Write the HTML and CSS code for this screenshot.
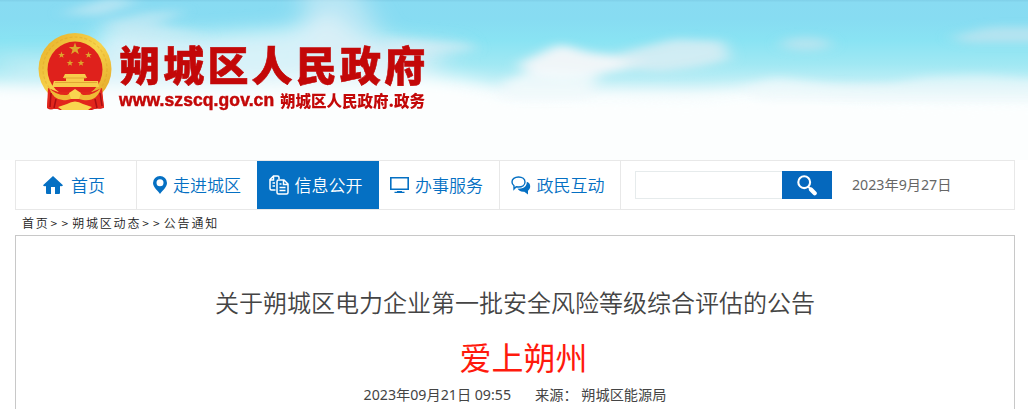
FILE: index.html
```html
<!DOCTYPE html>
<html lang="zh-CN">
<head>
    <meta charset="UTF-8">
    <meta name="viewport" content="width=device-width, initial-scale=1.0">
    <title>朔城区人民政府</title>
    <link rel="stylesheet" href="styles.css">
</head>
<body>
    <header class="header">
        <svg class="sky" viewBox="0 0 1028 160" preserveAspectRatio="none" aria-hidden="true">
            <defs>
                <linearGradient id="sky-color" x1="0" y1="0" x2="0" y2="1">
                    <stop offset="0" stop-color="#7fcfe8"/>
                    <stop offset=".015" stop-color="#88dbf2"/>
                    <stop offset=".12" stop-color="#87dcf2"/>
                    <stop offset=".25" stop-color="#89e3f3"/>
                    <stop offset=".4" stop-color="#a0e8f3"/>
                    <stop offset=".5" stop-color="#bbeef6"/>
                    <stop offset=".6" stop-color="#e9f7fa"/>
                    <stop offset=".75" stop-color="#fcfdfe"/>
                    <stop offset="1" stop-color="#fff"/>
                </linearGradient>
                <filter id="soft" x="-30%" y="-50%" width="160%" height="200%"><feGaussianBlur stdDeviation="13 9"/></filter>
                <filter id="thin" x="-30%" y="-50%" width="160%" height="200%"><feGaussianBlur stdDeviation="8 4"/></filter>
            </defs>
            <rect width="1028" height="160" fill="url(#sky-color)"/>
            <g filter="url(#soft)">
                <path d="M-40 84L40 88 100 82 210 84 380 68 460 80 520 97 600 94 700 96 780 86 860 97 1080 100V220H-40Z" fill="#fcfefe"/>
                <path d="M105 25L200 34 290 28 330 10 360 38 440 48 400 85 80 88Z" fill="#e2f3f9" opacity=".85"/>
                <path d="M300 -15H355L385 38 465 46 430 72 310 55Z" fill="#dceef6" opacity=".55"/>
                <path d="M-10 56L80 56 110 70 20 82Z" fill="#d9f2f8" opacity=".5"/>
            </g>
            <g filter="url(#thin)">
                <path d="M60 14L110 -2 140 2 100 15Z" fill="#cceaf4" opacity=".7"/>
                <path d="M105 24L145 12 187 10 155 26 210 36 130 40Z" fill="#cdebf4" opacity=".6"/>
                <path d="M382 39L470 43 476 50 400 56Z" fill="#d8edf5" opacity=".65"/>
                <path d="M518 64L560 44 590 53 640 58 644 67 600 74 565 80 530 76Z" fill="#f0f5f8"/>
                <path d="M620 53L674 39 724 41 730 60 700 67 660 72 625 68Z" fill="#dbedf3" opacity=".85"/>
                <path d="M505 80L545 67 600 73 590 98 500 98Z" fill="#f2f9fb" opacity=".85"/>
                <ellipse cx="806" cy="44" rx="25" ry="7" fill="#c2e4ef" opacity=".75"/>
                <path d="M950 37L990 27 1050 27V43H965Z" fill="#b9e3ef" opacity=".9"/>
                <path d="M740 88L775 78 830 85 890 84 925 77 980 75 1050 80V100H760Z" fill="#edf7fa" opacity=".65"/>
            </g>
        </svg>
        <div class="logo">
            <svg class="emblem" viewBox="0 0 74 78" aria-hidden="true">
                <defs>
                    <linearGradient id="gold" x1="0" y1="0" x2="1" y2="1">
                        <stop offset="0" stop-color="#e5ad28"/>
                        <stop offset=".5" stop-color="#f8d44c"/>
                        <stop offset="1" stop-color="#e0a022"/>
                    </linearGradient>
                    <path id="star" d="M0-1L.24-.31.95-.31.38.12.59.81 0 .4-.59.81-.38.12-.95-.31-.24-.31Z"/>
                </defs>
                <path d="M11 54L9 75Q13 78 17 75L22 77H54L59 75Q63 77 66 74L63 54Z" fill="#d71b18"/>
                <ellipse cx="37" cy="36" rx="36.5" ry="36" fill="url(#gold)"/>
                <ellipse cx="37" cy="36" rx="32" ry="32" fill="none" stroke="#d79c23" stroke-width="1.2" stroke-dasharray="3 2" opacity=".35"/>
                <ellipse cx="37" cy="36.5" rx="27.5" ry="28" fill="#df211c"/>
                <g fill="#dda52d">
                    <use href="#star" transform="translate(37 16) scale(6.5)"/>
                    <use href="#star" transform="translate(23.5 22) scale(3.5)"/>
                    <use href="#star" transform="translate(50.5 22) scale(3.5)"/>
                    <use href="#star" transform="translate(32 30) scale(3.5)"/>
                    <use href="#star" transform="translate(43 30) scale(3.5)"/>
                </g>
                <path d="M27 41H47L49 45H46V48H60L61 54H14L16 48H28V45H25Z" fill="#f8cd4b"/>
                <path d="M26 45H48M17 49.5H59" stroke="#dc9c2d" stroke-width=".8"/>
                <path d="M10 55L20 59H54L64 55 66 75 57 76 44 76H30L17 76 9 75Z" fill="#e2261c"/>
                <path d="M11 55Q19 63 29 62L37 57 45 62Q55 63 63 55Q59 69 45 67L37 65 29 67Q16 69 11 55Z" fill="#efb936"/>
                <path d="M31 60L37 56 43 60 41 66H33ZM29 71Q37 66 45 71L54 74 50 77H24L20 74Z" fill="#f9d64f"/>
                <path d="M13 60L12 74M18 66L16 75M57 66L59 75M62 60L64 73" stroke="#a80f13" stroke-width="1.5"/>
            </svg>
            <div class="logo-text">
                <h1>朔城区人民政府</h1>
                <p><span class="domain">www.szscq.gov.cn</span><span class="domain-cn">朔城区人民政府.政务</span></p>
            </div>
        </div>
    </header>
    <div class="container">
        <nav class="navbar">
            <ul>
                <li><a href="#">
                    <svg class="icon-home" width="20" height="18" viewBox="0 0 20 18" fill="currentColor"><path d="M10 0L20 9.2Q19 10.8 17 10V17Q17 18 16 18H12V11H8V18H4Q3 18 3 17V10Q1 10.8 0 9.2Z"/></svg>
                    <span>首页</span></a></li>
                <li><a href="#">
                    <svg width="14" height="18" viewBox="0 0 14 18" fill="currentColor"><path fill-rule="evenodd" d="M7 0A7 7 0 0 1 14 7C14 11 9 15 7 18 5 15 0 11 0 7A7 7 0 0 1 7 0ZM7 3.2A3.5 3.5 0 1 0 7 10.2 3.5 3.5 0 1 0 7 3.2Z"/></svg>
                    <span>走进城区</span></a></li>
                <li class="active"><a href="#">
                    <svg width="20" height="20" viewBox="0 0 20 20" fill="none" stroke="currentColor" stroke-width="1.5"><path d="M6.5 15H2.5Q1 15 1 13.5V4.5L4.5 1H8.5Q10 1 10 2.5V4M1 5H4.5V1M3.5 8H6M3.5 11H6"/><path d="M8 17.5V6.5Q8 5 9.5 5H15L19 9V17.5Q19 19 17.5 19H9.5Q8 19 8 17.5ZM14.5 5V9.5H19M10.5 9H12.5M10.5 12.5H16.5M10.5 15.5H16.5"/></svg>
                    <span>信息公开</span></a></li>
                <li class="shifted"><a href="#">
                    <svg width="19" height="16" viewBox="0 0 19 16"><path d="M.8.8H18.2V12.2H.8Z" fill="none" stroke="currentColor" stroke-width="1.6"/><path d="M7 14H12V14.7H14.5V16H4.5V14.7H7Z" fill="currentColor"/></svg>
                    <span>办事服务</span></a></li>
                <li class="shifted"><a href="#">
                    <svg width="20" height="19" viewBox="0 0 20 19"><path d="M7.5 1C11.3 1 14 3 14 6S11.3 11 7.5 11L5.2 10.8 3 13V9.8C1.6 8.8 1 7.6 1 6 1 3 3.7 1 7.5 1Z" fill="none" stroke="currentColor" stroke-width="1.4"/><path d="M15.8 5.7C18.2 6.4 19.2 8.2 19.2 10.3 19.2 12.3 18.4 13.6 17 14.7V18.5L13.3 15.8C10 16.2 7.5 14.8 6.6 12.6 12 13 16 10.5 15.8 5.7Z" fill="currentColor"/></svg>
                    <span>政民互动</span></a></li>
            </ul>
            <form class="search">
                <input type="text" aria-label="搜索">
                <button type="button" aria-label="搜索">
                    <svg width="20" height="21" viewBox="0 0 20 21" fill="none" stroke="#fff" stroke-linecap="round"><circle cx="7.2" cy="7.2" r="5.9" stroke-width="2.1"/><path d="M11.5 12L14 14.3" stroke-width="2"/><path d="M14 14.5L17.7 18.2" stroke-width="4.2"/></svg>
                </button>
            </form>
            <span class="today">2023年9月27日</span>
        </nav>
        <div class="breadcrumb"><a href="#">首页</a><span>&gt;&gt;</span><a href="#">朔城区动态</a><span>&gt;&gt;</span><a href="#">公告通知</a></div>
        <main class="article">
            <h2>关于朔城区电力企业第一批安全风险等级综合评估的公告</h2>
            <p class="slogan">爱上朔州</p>
            <p class="info"><span>2023年09月21日 09:55</span><span>来源： 朔城区能源局</span></p>
        </main>
    </div>
</body>
</html>
```
FILE: styles.css
```css
* {
    box-sizing: border-box;
}
body {
    margin: 0;
    background: #fff;
    font-family: "Noto Sans CJK SC", sans-serif;
    color: #444;
}
h1, h2, p, ul {
    margin: 0;
    padding: 0;
    font-weight: normal;
}
a {
    color: inherit;
    text-decoration: none;
}
svg {
    display: block;
    flex: none;
}

.header {
    position: relative;
    height: 160px;
}
.sky {
    position: absolute;
    top: 0;
    left: 0;
    width: 100%;
    height: 160px;
}
.logo {
    position: relative;
    display: flex;
    padding: 33px 0 0 38px;
    color: #c30808;
}
.emblem {
    width: 74px;
    height: 78px;
}
.logo-text {
    margin: 7px 0 0 7px;
    white-space: nowrap;
}
.logo-text h1 {
    height: 50px;
    font-size: 41px;
    font-weight: 900;
    line-height: 46px;
    letter-spacing: 3.2px;
    -webkit-text-stroke: 0.6px #c30808;
}
.logo-text p {
    display: flex;
    height: 20px;
    line-height: 20px;
}
.domain {
    width: 161px;
    font: bold 17.5px/20px "Liberation Sans", Arial, sans-serif;
    letter-spacing: 0.1px;
    -webkit-text-stroke: 0.5px #c30808;
}
.domain-cn {
    font-size: 15.5px;
    font-weight: 900;
}

.container {
    width: 1000px;
    margin: 0 13px 0 15px;
}
.navbar {
    display: flex;
    align-items: center;
    height: 50px;
    border: 1px solid #e8e8e8;
}
.navbar ul {
    display: flex;
    height: 48px;
    list-style: none;
}
.navbar li {
    width: 121px;
    border-right: 1px solid #e8e8e8;
}
.navbar li a {
    display: flex;
    align-items: center;
    justify-content: center;
    gap: 6px;
    height: 48px;
    color: #0570c3;
    font-size: 17px;
    font-weight: 350;
    white-space: nowrap;
}
.navbar li a span {
    margin-bottom: 1px;
}
.navbar li:first-child a {
    padding-right: 4px;
}
.navbar li .icon-home {
    margin-right: 2px;
}
.navbar li.active {
    width: 122px;
    margin: 0 0 0 -1px;
    background: #0570c3;
    border: 0;
}
.navbar li.active a {
    padding-right: 5px;
    color: #fff;
}
.navbar li.shifted a {
    padding-right: 5px;
}
.search {
    display: flex;
    margin-left: 14px;
}
.search input {
    width: 147px;
    height: 28px;
    border: 1px solid #e6ebec;
    border-right: 0;
    outline: 0;
}
.search button {
    display: flex;
    align-items: center;
    justify-content: center;
    width: 50px;
    height: 28px;
    padding: 0;
    border: 0;
    background: #0568bd;
}
.today {
    margin: 0 0 2px 20px;
    color: #666;
    font-family: "Noto Sans", "Noto Sans CJK SC", sans-serif;
    font-size: 14.2px;
}

.breadcrumb {
    height: 25px;
    padding-left: 7px;
    color: #222;
    font-size: 12px;
    font-weight: 350;
    line-height: 26px;
    letter-spacing: 1.8px;
}
.breadcrumb span {
    letter-spacing: 4.2px;
    padding-left: 1px;
}

.article {
    height: 174px;
    padding-top: 44px;
    border: 1px solid #c8c8c8;
    border-bottom: 0;
    text-align: center;
}
.article h2 {
    font-size: 24px;
    font-weight: 350;
    line-height: 44px;
}
.slogan {
    height: 60px;
    margin-left: 17px;
    color: #ff1a0d;
    font-size: 32px;
    line-height: 64px;
}
.info {
    display: flex;
    justify-content: center;
    gap: 24px;
    font-family: "Noto Sans", "Noto Sans CJK SC", sans-serif;
    font-size: 14.2px;
    line-height: 22px;
}
```
